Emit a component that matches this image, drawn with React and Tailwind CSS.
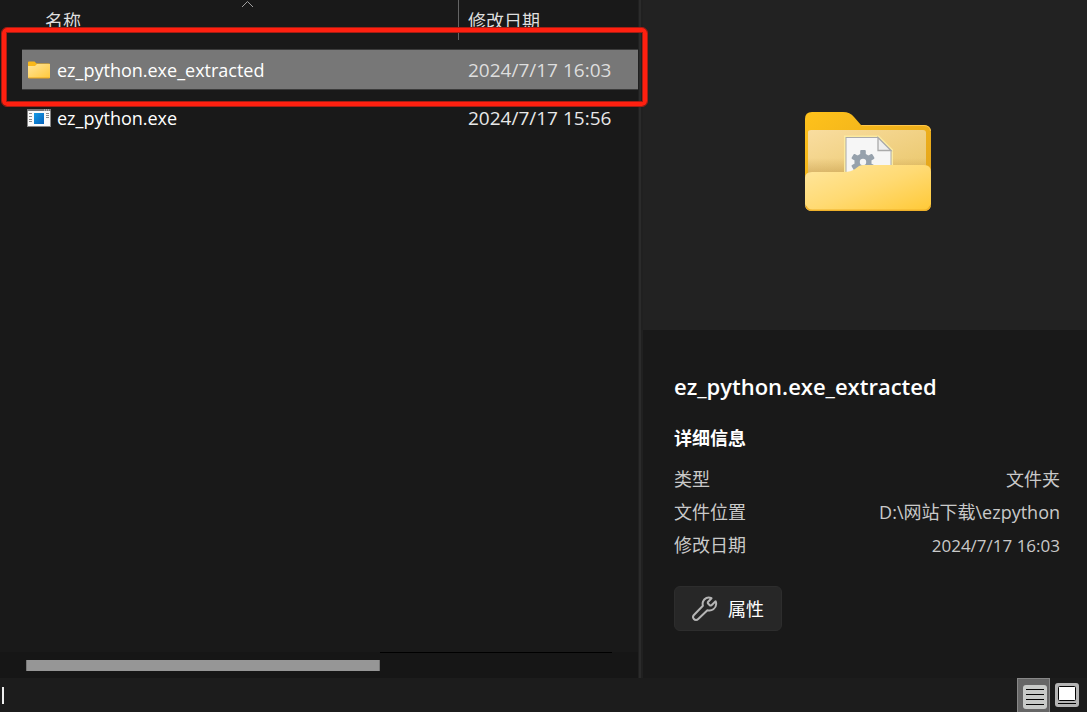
import React from "react";

const files = [
  { name: "ez_python.exe_extracted", date: "2024/7/17 16:03", kind: "folder", selected: true },
  { name: "ez_python.exe", date: "2024/7/17 15:56", kind: "program", selected: false },
];

const details = [
  { label: "类型", value: "文件夹", numeric: false },
  { label: "文件位置", value: "D:\\网站下载\\ezpython", numeric: false },
  { label: "修改日期", value: "2024/7/17 16:03", numeric: true },
];

function SmallFolder() {
  return (
    <svg width="24" height="18" viewBox="0 0 24 18" aria-hidden="true">
      <defs>
        <linearGradient id="small-front" x1="0" y1="0" x2="1" y2="1">
          <stop offset="0" stopColor="#ffe59a" />
          <stop offset="1" stopColor="#ffc93c" />
        </linearGradient>
      </defs>
      <path d="M1 1.5Q1 .5 2 .5H7.5L9.5 2.5H22Q23 2.5 23 3.500V16H1Z" fill="#f9b81a" />
      <path d="M1 5H8L10 3H23V16.500Q23 17 22 17H2Q1 17 1 16.500Z" fill="url(#small-front)" />
      <path d="M1.500 17H22.500" stroke="#e9a51d" />
    </svg>
  );
}

function ProgramIcon() {
  return (
    <svg width="24" height="18" viewBox="0 0 24 18" aria-hidden="true">
      <defs>
        <linearGradient id="program-blue" x1="0" y1="0" x2="1" y2="1">
          <stop offset="0" stopColor="#159ae4" />
          <stop offset="1" stopColor="#0762bb" />
        </linearGradient>
      </defs>
      <rect x=".5" y=".5" width="23" height="17" fill="#fafafa" stroke="#858585" />
      <path d="M0 1H24" stroke="#777" strokeWidth="2" />
      <path d="M17 1H18M19 1H20M21 1H22" stroke="#ddd" />
      <rect x="7" y="4" width="10" height="11" fill="url(#program-blue)" />
      <path d="M2 4.500H5M2 7.500H5M2 10.500H5M2 12.500H5M19 4.500H22M19 6.500H22M19 8.500H22" stroke="#8b8b8b" />
    </svg>
  );
}

function LargeFolder() {
  return (
    <svg width="128" height="100" viewBox="0 0 128 100" role="img" aria-label="文件夹">
      <defs>
        <linearGradient id="folder-back" x1="0" y1="0" x2="1" y2="1">
          <stop offset="0" stopColor="#ffc21b" />
          <stop offset="1" stopColor="#dfa01c" />
        </linearGradient>
        <linearGradient id="folder-inner" x1="0" y1="0" x2="1" y2="1">
          <stop offset="0" stopColor="#f9dda0" />
          <stop offset="1" stopColor="#e9c669" />
        </linearGradient>
        <linearGradient id="folder-front" x1="0" y1="0" x2="1" y2="1">
          <stop offset="0" stopColor="#ffe7a0" />
          <stop offset=".5" stopColor="#ffda73" />
          <stop offset="1" stopColor="#ffc936" />
        </linearGradient>
        <linearGradient id="folder-shade" x1="0" y1="0" x2="0" y2="1">
          <stop offset="0" stopColor="#a7782c" stopOpacity="0" />
          <stop offset="1" stopColor="#a7782c" stopOpacity=".4" />
        </linearGradient>
      </defs>
      <path d="M1 7Q1 0 8 0H39Q46 0 50 5L57 13H120Q127 13 127 20V92H1Z" fill="url(#folder-back)" />
      <path d="M57.500 13.500H120Q126 14 126.500 19" fill="none" stroke="#ffc64a" />
      <path d="M4 20Q4 18 7 18H119Q122 18 122 21V65H4Z" fill="url(#folder-inner)" />
      <path d="M4 46H122V65H4Z" fill="url(#folder-shade)" />
      <path d="M41 24.500H74.500L88 38V66H41Z" fill="#f6f6f6" stroke="#fbeaa0" strokeWidth="2" />
      <path d="M42 25.500H74L87 38.500V65M42 25V65" fill="none" stroke="#aaa" strokeWidth="1" />
      <path d="M74 25.500V38.500H87Z" fill="#eeeeee" stroke="#aaa" strokeWidth="1.300" />
      <g transform="translate(59 50)" fill="#96a1ac">
        <circle r="8.600" />
        <rect x="-2.800" y="-12" width="5.600" height="24" rx="1" />
        <rect x="-2.800" y="-12" width="5.600" height="24" rx="1" transform="rotate(60)" />
        <rect x="-2.800" y="-12" width="5.600" height="24" rx="1" transform="rotate(120)" />
        <circle r="3.200" fill="#f6f6f6" />
      </g>
      <path d="M1 66Q1 60 8 60H40Q47 60 51 57L55 54Q57 53 60 53H120Q127 53 127 60V92Q127 99 120 99H8Q1 99 1 92Z" fill="url(#folder-front)" />
      <path d="M2 94Q3 98.200 8 98.200H120Q125 98.200 126 94" fill="none" stroke="#efb12a" strokeWidth="1.500" />
    </svg>
  );
}

function WrenchIcon() {
  return (
    <svg width="26" height="26" viewBox="0 0 26 26" fill="none" aria-hidden="true">
      <path
        d="M19.500 2.200C16 .6 12.200 2.100 11 5.600C10.500 7 10.500 8.400 10.900 9.800L1.900 19C.9 20.100.9 21.900 1.900 23C3 24.200 5 24.200 6.200 23L15.400 14.200C19.800 15.500 24 12.500 24.200 8C24.200 7 24 6.100 23.600 5.300L19.500 9.300Q18.500 10 17.500 9L16.300 7.800Q15.300 6.700 16.200 5.700Z"
        stroke="#b5b5b5"
        strokeWidth="2"
        strokeLinejoin="round"
      />
    </svg>
  );
}

function ListViewIcon() {
  return (
    <svg width="24" height="24" viewBox="0 0 24 24" aria-hidden="true">
      <rect width="24" height="24" rx="3" fill="#c8cac8" />
      <path d="M3 4.500H21M3 9.500H21M3 14.500H21M3 19.500H21" stroke="#050505" />
    </svg>
  );
}

function ThumbnailViewIcon() {
  return (
    <svg width="24" height="24" viewBox="0 0 24 24" aria-hidden="true">
      <rect width="24" height="24" rx="3" fill="#b5b5b5" />
      <rect x="3.500" y="3.500" width="17" height="14" rx="1" fill="#fff" stroke="#050505" />
      <path d="M3 20.500H21" stroke="#050505" />
    </svg>
  );
}

function FileList() {
  return (
    <table className="block w-full">
      <thead className="block">
        <tr className="grid h-10 grid-cols-[459px_1fr] text-left text-lg text-[#dedede]">
          <th scope="col" aria-sort="ascending" className="relative border-r border-[#646464] pl-[45px] pt-[7px] font-normal">
            名称
            <svg className="absolute left-[241px] top-0" width="13" height="8" viewBox="0 0 13 8" fill="none" aria-hidden="true">
              <path d="M1 7L6.500 1.500L12 7" stroke="#a0a0a0" />
            </svg>
          </th>
          <th scope="col" className="pl-[9px] pt-[7px] font-normal">修改日期</th>
        </tr>
      </thead>
      <tbody className="flex flex-col gap-[7px] pl-[22px] pt-[9px]">
        {files.map((file) => (
          <tr
            key={file.name}
            aria-selected={file.selected}
            className={
              file.selected
                ? "grid h-[41px] grid-cols-[437px_1fr] items-center border-y border-[#3b3b3b] bg-[#777777] text-[#dedede]"
                : "grid h-[41px] grid-cols-[437px_1fr] items-center text-[#e8e8e8]"
            }
          >
            <td className="flex items-center gap-1.5 pl-[5px] text-lg text-white">
              {file.kind === "folder" ? <SmallFolder /> : <ProgramIcon />}
              {file.name}
            </td>
            <td className="pl-[9px]">{file.date}</td>
          </tr>
        ))}
      </tbody>
    </table>
  );
}

export default function App() {
  return (
    <div className="flex min-h-screen flex-col bg-[#191919] font-['Open_Sans','Noto_Sans_CJK_SC',sans-serif] text-[19px] leading-7 text-white">
      <div className="flex flex-1">
        <main className="relative flex flex-1 flex-col">
          <FileList />
          <div className="pointer-events-none absolute -right-[10px] left-px top-[27px] h-20 rounded-md border border-[#a51d13]">
            <div className="h-full rounded-[5px] border-4 border-[#ff2010]">
              <div className="h-full border border-[#a51d13]" />
            </div>
          </div>
          <div className="mt-auto flex h-[26px] bg-[#161616] pl-[26px]">
            <div className="mt-2 h-[11px] w-[354px] border-x border-[#777777] bg-[#969696]" />
            <div className="mr-[26px] h-px flex-1 bg-black" />
          </div>
        </main>
        <div className="w-[5px] border-x border-r-2 border-[#202020] bg-[#2b2b2b]" />
        <aside className="w-[444px]">
          <div className="flex h-[330px] items-center justify-center bg-[#222222] pb-1.5 pl-1.5">
            <LargeFolder />
          </div>
          <div className="pl-[31px] pr-[27px] pt-10">
            <h1 className="text-[22px] font-semibold leading-8">ez_python.exe_extracted</h1>
            <h2 className="mt-[22px] text-lg font-bold">详细信息</h2>
            <dl className="mt-[11px] flex flex-col text-lg leading-[33px] text-[#c9c9c9]">
              {details.map((item) => (
                <div key={item.label} className="flex justify-between">
                  <dt>{item.label}</dt>
                  <dd className={item.numeric ? "text-[17px] leading-[33px]" : undefined}>{item.value}</dd>
                </div>
              ))}
            </dl>
            <button type="button" className="mt-6 flex h-[45px] items-center gap-2.5 rounded-md border border-[#2d2d2d] bg-[#272727] px-[17px] text-lg">
              <WrenchIcon />
              属性
            </button>
          </div>
        </aside>
      </div>
      <footer className="flex h-[34px] items-start bg-[#1c1c1c] pr-2">
        <div className="ml-0.5 mt-[9px] h-[17px] w-0.5 bg-[#eeeeee]" />
        <button type="button" aria-label="详细信息视图" aria-pressed="true" className="ml-auto flex h-[34px] w-[33px] items-end justify-center border border-b-0 border-[#888888] bg-[#666666] pb-[3px] pl-0.5">
          <ListViewIcon />
        </button>
        <button type="button" aria-label="大缩略图视图" aria-pressed="false" className="ml-[5px] mt-[5px]">
          <ThumbnailViewIcon />
        </button>
      </footer>
    </div>
  );
}
